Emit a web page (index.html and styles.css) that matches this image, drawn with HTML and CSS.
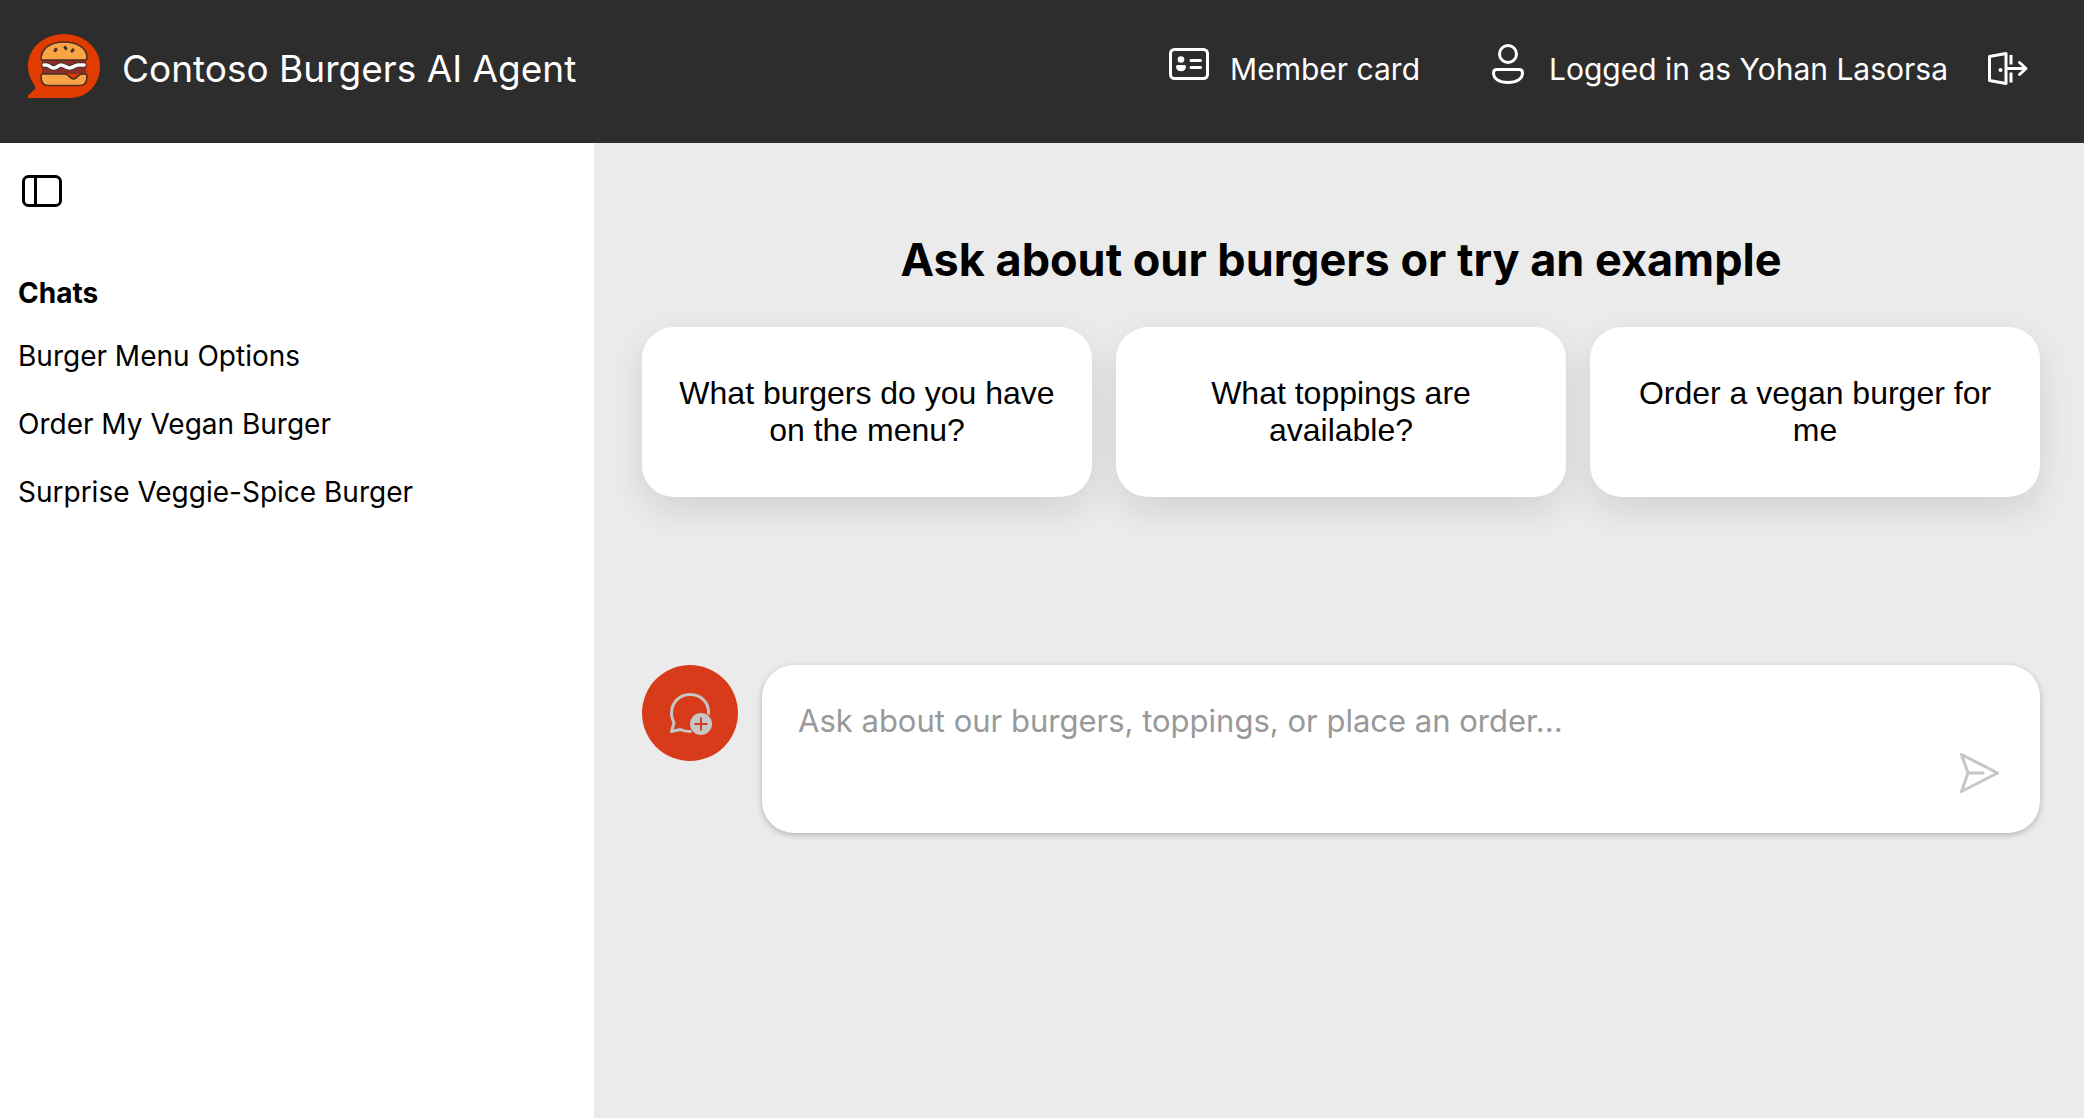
FILE: index.html
```html
<!DOCTYPE html>
<html lang="en">
<head>
<meta charset="utf-8">
<meta name="viewport" content="width=device-width, initial-scale=1">
<title>Contoso Burgers AI Agent</title>
<link rel="stylesheet" href="styles.css">
</head>
<body>
<header class="topbar">
  <svg class="logo" viewBox="0 0 72 64" aria-hidden="true">
    <path fill="#e03c00" d="M36 0C56 0 72 14 72 32S60 64 42 64H0V61.500L7.500 54.500C7.500 53 6.500 51.500 5 49C1.700 44 0 38.500 0 32C0 14 16 0 36 0Z"/>
    <path fill="#8b2f24" d="M14 26h44v14H14z"/>
    <g stroke="#4a2e2a" stroke-width="1.600" stroke-linejoin="round">
      <path fill="#f9a445" d="M13 25.500C13 14 23 8 36 8S59 14 59 23.500Q59 26 57 26H15Q13 26 13 25.500Z"/>
      <path fill="#f9a445" d="M15 40H37C41 40 42 45 45.500 45S50 40 54 40H57Q59 40 59 42C59 48 57 51.500 52 51.500H20C15 51.500 13 48 13 42Q13 40 15 40Z"/>
    </g>
    <path fill="none" stroke="#4a2e2a" stroke-width="5.600" stroke-linecap="round" d="M16 31H18C22 31 22 34 25.500 34S30 31 33 31S38 34 41.500 34S47 31 50 31H56"/>
    <path fill="none" stroke="#fff" stroke-width="3.600" stroke-linecap="round" d="M16 31H18C22 31 22 34 25.500 34S30 31 33 31S38 34 41.500 34S47 31 50 31H56"/>
    <g fill="#4a2e2a"><ellipse cx="27.500" cy="16" rx="2.400" ry="1.600" transform="rotate(-50 27.500 16)"/><ellipse cx="37.500" cy="14" rx="2.400" ry="1.600" transform="rotate(50 37.500 14)"/><ellipse cx="44.500" cy="16.500" rx="2.400" ry="1.600" transform="rotate(-50 44.500 16.500)"/></g>
  </svg>
  <h1 class="brand">Contoso Burgers AI Agent</h1>
  <nav class="account">
    <a class="card-link" href="#card">
      <svg class="icon" viewBox="0 0 48 48" fill="none" stroke="currentColor" stroke-width="3" stroke-linecap="round" aria-hidden="true">
        <rect x="5.500" y="9.500" width="37" height="29" rx="4"/>
        <path d="M26 20.500H35.500M26 27.500H35.500"/>
        <g fill="currentColor" stroke="none"><circle cx="16" cy="19.500" r="3.300"/><path d="M12.500 25H19.500Q21 25 21 26.500C21 29.500 19 31.200 16 31.200S11 29.500 11 26.500Q11 25 12.500 25Z"/></g>
      </svg>
      <span>Member card</span>
    </a>
    <div class="user">
      <svg class="icon" viewBox="0 0 48 48" fill="none" stroke="currentColor" stroke-width="3" aria-hidden="true">
        <circle cx="24" cy="14" r="8.500"/>
        <path d="M13 29.500H35Q38.500 29.500 38.500 33C38.500 39 32.500 42.500 24 42.500S9.500 39 9.500 33Q9.500 29.500 13 29.500Z"/>
      </svg>
      <span>Logged in as Yohan Lasorsa</span>
    </div>
    <button class="icon-button" type="button" aria-label="Log out">
      <svg class="icon" viewBox="0 0 48 48" fill="none" stroke="currentColor" stroke-width="3" stroke-linecap="round" stroke-linejoin="round" aria-hidden="true">
        <path d="M24 8.500V38.500L7.500 35.500V11.500ZM24 23.500H43M37.500 17.500L44 23.500L37.500 29.500"/>
        <path stroke-linecap="butt" d="M29 10V19.500M29 27.500V37.500"/>
        <circle cx="18.500" cy="25" r="2" fill="currentColor" stroke="none"/>
      </svg>
    </button>
  </nav>
</header>
<div class="layout">
  <aside class="sidebar">
    <button class="icon-button" type="button" aria-label="Toggle chats panel">
      <svg class="icon" viewBox="0 0 48 48" fill="none" stroke="currentColor" stroke-width="3" aria-hidden="true">
        <rect x="5.500" y="9.500" width="37" height="29" rx="5"/><path d="M17.500 9.500V38.500"/>
      </svg>
    </button>
    <h2 class="chats-title">Chats</h2>
    <ul class="chats">
      <li><a href="#menu">Burger Menu Options</a></li>
      <li><a href="#vegan">Order My Vegan Burger</a></li>
      <li><a href="#surprise">Surprise Veggie-Spice Burger</a></li>
    </ul>
  </aside>
  <main class="main">
    <h2 class="heading">Ask about our burgers or try an example</h2>
    <div class="suggestions">
      <button class="suggestion" type="button">What burgers do you have on the menu?</button>
      <button class="suggestion" type="button">What toppings are available?</button>
      <button class="suggestion" type="button">Order a vegan burger for me</button>
    </div>
    <form class="composer">
      <button class="new-chat" type="button" aria-label="Start new chat">
        <svg class="icon" viewBox="0 0 48 48" fill="none" stroke="currentColor" stroke-width="3" stroke-linecap="butt" stroke-linejoin="round" aria-hidden="true">
          <path d="M42.500 25.500C43.500 14 35.500 5.500 24 5.500C13 5.500 5.500 14 5.500 24.500C5.500 28 6.500 31 8 34L5.500 42.500L14.500 40.500C17.500 42 20.500 42.500 25.500 42.500"/>
          <circle cx="35" cy="35" r="11" fill="currentColor" stroke="none"/>
          <path stroke="#d83b1a" stroke-width="2" d="M28.500 35H41.500M35 28.500V41.500"/>
        </svg>
      </button>
      <div class="field">
        <textarea class="question" rows="1" aria-label="Your question" placeholder="Ask about our burgers, toppings, or place an order..."></textarea>
        <button class="icon-button send" type="submit" aria-label="Send">
          <svg class="icon" viewBox="0 0 48 48" fill="none" stroke="currentColor" stroke-width="3" stroke-linecap="round" stroke-linejoin="round" aria-hidden="true">
            <path d="M5.500 5.500L41.500 24L5.500 42.500L12 24ZM12 24H27"/>
          </svg>
        </button>
      </div>
    </form>
  </main>
</div>
</body>
</html>
```
FILE: styles.css
```css
* {
  box-sizing: border-box;
}

body {
  margin: 0;
  min-height: 100vh;
  display: flex;
  flex-direction: column;
  color: #000;
  background: #fff;
  font-family: Inter, "Noto Sans", sans-serif;
  font-size: 30px;
}

button {
  margin: 0;
  padding: 0;
  border: 0;
  background: none;
  color: inherit;
  cursor: pointer;
}

a {
  color: inherit;
  text-decoration: none;
}

.icon {
  display: block;
  flex: none;
  width: 48px;
  height: 48px;
}

.topbar {
  display: flex;
  align-items: center;
  min-height: 143px;
  padding: 0 54px 6px 28px;
  color: #fff;
  background: #2d2d2d;
}

.logo {
  flex: none;
  width: 72px;
  height: 64px;
  margin-bottom: 6px;
}

.brand {
  margin: 0 0 0 22px;
  font-size: 37px;
  line-height: 48px;
  font-weight: 400;
}

.account {
  display: flex;
  align-items: center;
  margin-left: auto;
  line-height: 40px;
}

.card-link,
.user {
  display: flex;
  align-items: center;
  gap: 17px;
}

.card-link .icon,
.user .icon {
  margin-bottom: 10px;
}

.user {
  margin: 0 34px 0 64px;
}

.layout {
  flex: 1;
  display: flex;
}

.sidebar {
  flex: none;
  width: 594px;
  padding: 24px 18px;
  font-size: 28px;
  line-height: 36px;
}

.chats-title {
  margin: 52px 0 0;
  font-size: 28px;
  font-weight: 700;
}

.chats {
  display: flex;
  flex-direction: column;
  gap: 32px;
  margin: 27px 0 0;
  padding: 0;
  list-style: none;
}

.main {
  flex: 1;
  min-width: 0;
  padding: 87px 44px 48px 48px;
  background: #ebebeb;
}

.heading {
  margin: 0 0 37px;
  font-size: 45px;
  line-height: 60px;
  font-weight: 700;
  text-align: center;
}

.suggestions {
  display: grid;
  grid-template-columns: repeat(3, 1fr);
  gap: 24px;
}

.suggestion {
  min-height: 170px;
  padding: 32px;
  border-radius: 32px;
  background: #fff;
  box-shadow: 0 13px 36px rgba(0, 0, 0, 0.11);
  font-family: "Liberation Sans", Arial, sans-serif;
  font-size: 32px;
  line-height: 37px;
}

.composer {
  display: flex;
  align-items: flex-start;
  gap: 24px;
  margin-top: 168px;
}

.new-chat {
  display: grid;
  place-items: center;
  flex: none;
  width: 96px;
  height: 96px;
  border-radius: 50%;
  color: #c6c6c6;
  background: #d83b1a;
}

.field {
  flex: 1;
  display: flex;
  align-items: flex-end;
  min-height: 168px;
  padding: 36px;
  border-radius: 32px;
  background: #fff;
  box-shadow: 0 2px 6px rgba(0, 0, 0, 0.24);
}

.question {
  flex: 1;
  align-self: stretch;
  min-width: 0;
  padding: 0;
  border: 0;
  outline: 0;
  resize: none;
  background: none;
  color: #000;
  font: inherit;
  font-size: 31px;
  line-height: 40px;
}

.question::placeholder {
  color: #999;
}

.send {
  color: #c6c6c6;
}
```
